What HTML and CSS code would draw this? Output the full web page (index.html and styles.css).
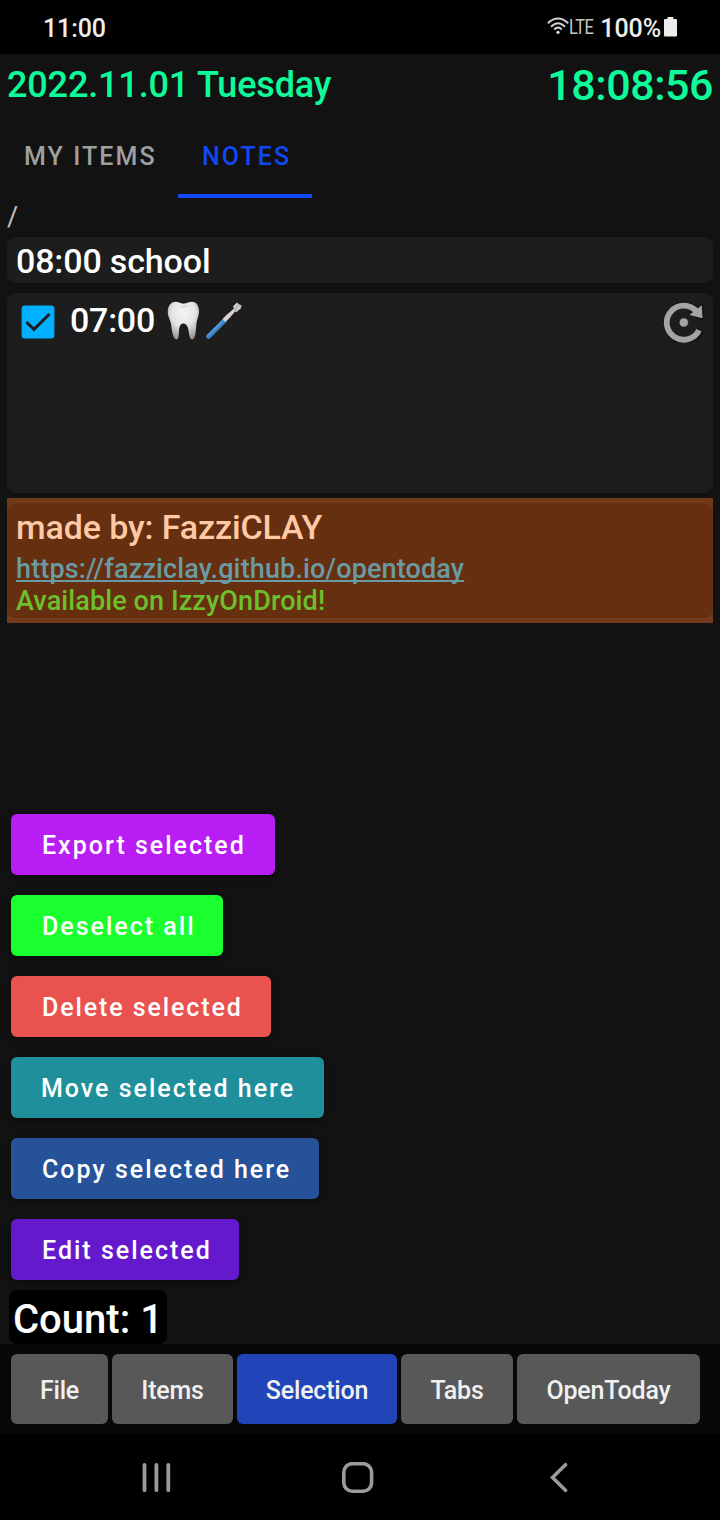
FILE: index.html
```html
<!DOCTYPE html>
<html lang="en">
<head>
<meta charset="utf-8">
<title>OpenToday</title>
<link rel="stylesheet" href="styles.css">
</head>
<body>
<div class="screen">
  <header class="status">
    <span class="status-time">11:00</span>
    <div class="status-right">
      <svg class="wifi" width="22" height="18" viewBox="0 0 22 18" fill="none" stroke="#d0d0d0" stroke-width="2">
        <path d="M.8 6.200Q11-3.200 21.200 6.200"/><path d="M4 9.800Q11 2.800 18 9.800"/><path d="M7.200 12.600Q11 8.600 14.800 12.600"/>
        <circle cx="11" cy="15.300" r="1.600" fill="#e0e0e0" stroke="none"/>
      </svg>
      <span class="lte">LTE</span>
      <span class="percent">100%</span>
      <svg class="battery" width="13" height="20" viewBox="0 0 13 20" fill="#ededed">
        <path d="M3.500 0h5.800v2H12q1 0 1 1v15.500q0 1-1 1H1q-1 0-1-1V3q0-1 1-1h2.500z"/>
      </svg>
    </div>
  </header>

  <div class="heading">
    <span class="date">2022.11.01 Tuesday</span>
    <span class="clock">18:08:56</span>
  </div>

  <nav class="tabs">
    <span class="tab tab-items">MY ITEMS</span>
    <span class="tab tab-notes">NOTES</span>
  </nav>

  <div class="path">/</div>

  <main class="list">
    <div class="card card-school">08:00 school</div>
    <div class="card card-teeth">
      <svg class="check" width="34" height="34" viewBox="0 0 34 34">
        <rect x=".6" y=".6" width="32.800" height="32.800" rx="3.500" fill="#00b0ff"/>
        <path d="M5.300 17 13 24.400 28.500 9" fill="none" stroke="#1c1c1c" stroke-width="3"/>
      </svg>
      <span class="teeth-time">07:00</span>
      <svg class="tooth" width="33" height="39" viewBox="0 0 33 39">
        <defs>
          <radialGradient id="enamel" cx=".5" cy=".3" r=".75">
            <stop offset="0" stop-color="#f4f4f4"/><stop offset=".5" stop-color="#e4e4e4"/><stop offset="1" stop-color="#8a8a8a"/>
          </radialGradient>
        </defs>
        <path fill="url(#enamel)" d="M.8 11C.8 4 4.500.8 8.500.8c3.500 0 5 1.900 8 1.900S21.500.8 25 .8c4.500 0 7 4 7 9.700 0 5-2.200 7.500-2.600 13-.4 5-.8 15-4.200 15-3.200 0-3-7-4.200-11.500-.8-3-2.500-4.500-4.800-4.500-2.500 0-3.500 2-4 5-.8 4 .2 11-2.600 11-3.800 0-4.800-9-5.400-14.500C3.600 18.500.8 16.500.8 11z"/>
        <path d="M14 4.500q2.500 3.500 6-.5" fill="none" stroke="#c0c0c0" stroke-width="1"/>
      </svg>
      <svg class="brush" width="36" height="37" viewBox="0 0 36 37" fill="none">
        <path d="M2.500 34.500 18.500 18.500" stroke="#3c82c8" stroke-width="4.600" stroke-linecap="round"/>
        <path d="M2 33.500 18 17.500" stroke="#78b2e4" stroke-width="1"/>
        <path d="m16.500 17 4.500-4.500 10-8.500 1.500 1.500-8.500 10-4.500 4.500z" fill="#d9d2d0"/>
        <path d="m27 4.500 4-4 1.800 1.500 2.700 1.200-.5 3-4.500 4-2-1z" fill="#bcbab8"/>
        <path d="m28 4.500 3.500-3.200M31.500 7.500l3-3" stroke="#f0f0f0" stroke-width="1"/>
      </svg>
      <svg class="cycle" width="42" height="42" viewBox="0 0 42 42">
        <path d="M38 29.300A18 18 0 1 1 33 8" fill="none" stroke="#151515" stroke-width="7"/>
        <path d="m39.300 3 .7 15.500L26 14z" fill="#151515" stroke="#151515" stroke-width="1.500"/>
        <path d="M36 29.200A17 17 0 1 1 33.500 10.500" fill="none" stroke="#a4a4a4" stroke-width="5.800"/>
        <path d="m38.700 4.200.8 13L26.500 14l3-2.500z" fill="#a4a4a4"/>
        <circle cx="20.800" cy="21.500" r="4.600" fill="#a4a4a4" stroke="#171717" stroke-width=".6"/>
      </svg>
    </div>
    <div class="selected">
      <div class="card-selected">
        <span class="made">made by: FazziCLAY</span>
        <a class="link">https://fazziclay.github.io/opentoday</a>
        <span class="available">Available on IzzyOnDroid!</span>
      </div>
    </div>
  </main>

  <section class="actions">
    <button class="action export">Export selected</button>
    <button class="action deselect">Deselect all</button>
    <button class="action delete">Delete selected</button>
    <button class="action move">Move selected here</button>
    <button class="action copy">Copy selected here</button>
    <button class="action edit">Edit selected</button>
  </section>
  <div class="count">Count: 1</div>

  <footer class="toolbar">
    <button class="tool tool-file">File</button>
    <button class="tool tool-items">Items</button>
    <button class="tool tool-selection">Selection</button>
    <button class="tool tool-tabs">Tabs</button>
    <button class="tool tool-app">OpenToday</button>
  </footer>

  <div class="navbar">
    <svg class="recents" width="30" height="32" viewBox="0 0 30 32" stroke="#9b9b9b" stroke-width="3.800" stroke-linecap="round">
      <path d="M2.500 3v25.200M14.400 3v25.200M26.300 3v25.200"/>
    </svg>
    <svg class="home" width="32" height="32" viewBox="0 0 32 32" fill="none" stroke="#9b9b9b" stroke-width="3.600">
      <rect x="1.800" y="1.700" width="27.800" height="27.600" rx="8.500"/>
    </svg>
    <svg class="back" width="18" height="32" viewBox="0 0 18 32" fill="none" stroke="#9b9b9b" stroke-width="3.600" stroke-linecap="round">
      <path d="M15.500 2.700 2.500 15.500l13 12.800" stroke-linejoin="miter"/>
    </svg>
  </div>
</div>
</body>
</html>
```
FILE: styles.css
```css
* { box-sizing: border-box; }
body { margin: 0; background: #000; }
.screen {
  width: 720px;
  height: 1520px;
  display: flex;
  flex-direction: column;
  background: #121212;
  font-family: Roboto, sans-serif;
  font-weight: 500;
  color: #fff;
  white-space: nowrap;
  overflow: hidden;
}
svg { display: block; flex: none; }
button { border: 0; margin: 0; padding: 0; font: inherit; color: inherit; }

.status {
  height: 54px;
  flex: none;
  display: flex;
  justify-content: space-between;
  padding: 0 43px 0 43px;
  background: #000;
  color: #ededed;
  font-size: 25px;
  line-height: 57px;
}
.status-time { letter-spacing: -.1px; }
.status-right { display: flex; }
.wifi { margin-top: 17px; }
.lte {
  width: 25px;
  margin: 0 6px 0 0;
  font-size: 20px;
  font-weight: 400;
  line-height: 54px;
  letter-spacing: -.5px;
  color: #c8c8c8;
  transform: scaleX(.82);
  transform-origin: left;
}
.percent { margin-right: 3px; letter-spacing: -.1px; }
.battery { margin-top: 17px; }

.heading {
  height: 61px;
  flex: none;
  display: flex;
  justify-content: space-between;
  padding: 0 7px;
  color: #0dfb99;
  line-height: 62px;
}
.date { font-size: 36px; letter-spacing: -.16px; }
.clock { font-size: 43px; letter-spacing: -.45px; }

.tabs {
  height: 83px;
  flex: none;
  display: flex;
  font-size: 25px;
  line-height: 84px;
  letter-spacing: 2.080px;
}
.tab { padding-left: 24px; }
.tab-items { width: 178px; color: #9f9f9f; }
.tab-notes { width: 134px; color: #1048f5; border-bottom: 4px solid #1048f5; }
.path { height: 39px; flex: none; padding-left: 7px; font-size: 27px; font-weight: 400; line-height: 38px; color: #c0c0c0; }

.list { flex: 1; padding: 0 7px; }
.card { border-radius: 9px; background: #1d1d1d; font-size: 34px; letter-spacing: -.14px; }
.card-school { height: 46px; padding-left: 9px; line-height: 49px; }
.card-teeth { height: 200px; margin: 10px 0 5px; padding-left: 14px; display: flex; align-items: flex-start; }
.check { margin-top: 12px; }
.teeth-time { width: 85px; margin-left: 15px; line-height: 55px; letter-spacing: -.25px; }
.tooth { margin: 8px 0 0 12px; }
.brush { margin: 9px 0 0 6px; }
.cycle { margin: 8px 8px 0 auto; }
.selected { height: 125px; padding: 5px 0; background: #703a1b; }
.card-selected {
  height: 115px;
  padding: 3px 9px 0;
  display: flex;
  flex-direction: column;
  align-items: flex-start;
  border-radius: 9px;
  background: #652f10;
  font-size: 27px;
}
.made { font-size: 34px; line-height: 42px; letter-spacing: -.12px; color: #ffc9a5; }
.link { margin-top: 5px; line-height: 32px; letter-spacing: .14px; color: #6b9aa3; text-decoration: underline; text-decoration-thickness: 1.500px; text-underline-offset: 2px; text-decoration-skip-ink: none; }
.available { line-height: 32px; letter-spacing: .1px; color: #6dc02c; }

.actions { flex: none; padding-left: 11px; display: flex; flex-direction: column; align-items: flex-start; gap: 20px; }
.action {
  height: 61px;
  padding-left: 31px;
  border-radius: 6px;
  text-align: left;
  font-size: 25px;
  line-height: 63px;
  letter-spacing: 2px;
  box-shadow: 0 2px 5px rgba(0, 0, 0, .4);
}
.export { width: 264px; background: #b81ef3; }
.deselect { width: 212px; background: #1aff2e; }
.delete { width: 260px; letter-spacing: 1.900px; background: #e9524f; }
.move { width: 313px; padding-left: 30px; background: #1f909b; }
.copy { width: 308px; background: #265299; }
.edit { width: 228px; background: #6519cd; }
.count { width: 158px; height: 54px; flex: none; margin: 10px 0 0 9px; padding-left: 4px; border-radius: 8px; background: #000; font-size: 40px; line-height: 59px; }

.toolbar { height: 90px; flex: none; display: flex; gap: 4px; padding: 10px 11px; background: #080808; }
.tool { height: 70px; border-radius: 6px; background: #585858; color: #f0f0f0; font-size: 25px; line-height: 73px; letter-spacing: -.2px; text-align: center; }
.tool-file { width: 97px; }
.tool-items { width: 121px; }
.tool-selection { width: 160px; background: #2145b8; }
.tool-tabs { width: 112px; }
.tool-app { width: 183px; }

.navbar { height: 86px; flex: none; display: flex; padding: 28px 0 0 142px; background: #000; }
.home { margin-left: 170px; }
.back { margin-left: 176px; }
```
